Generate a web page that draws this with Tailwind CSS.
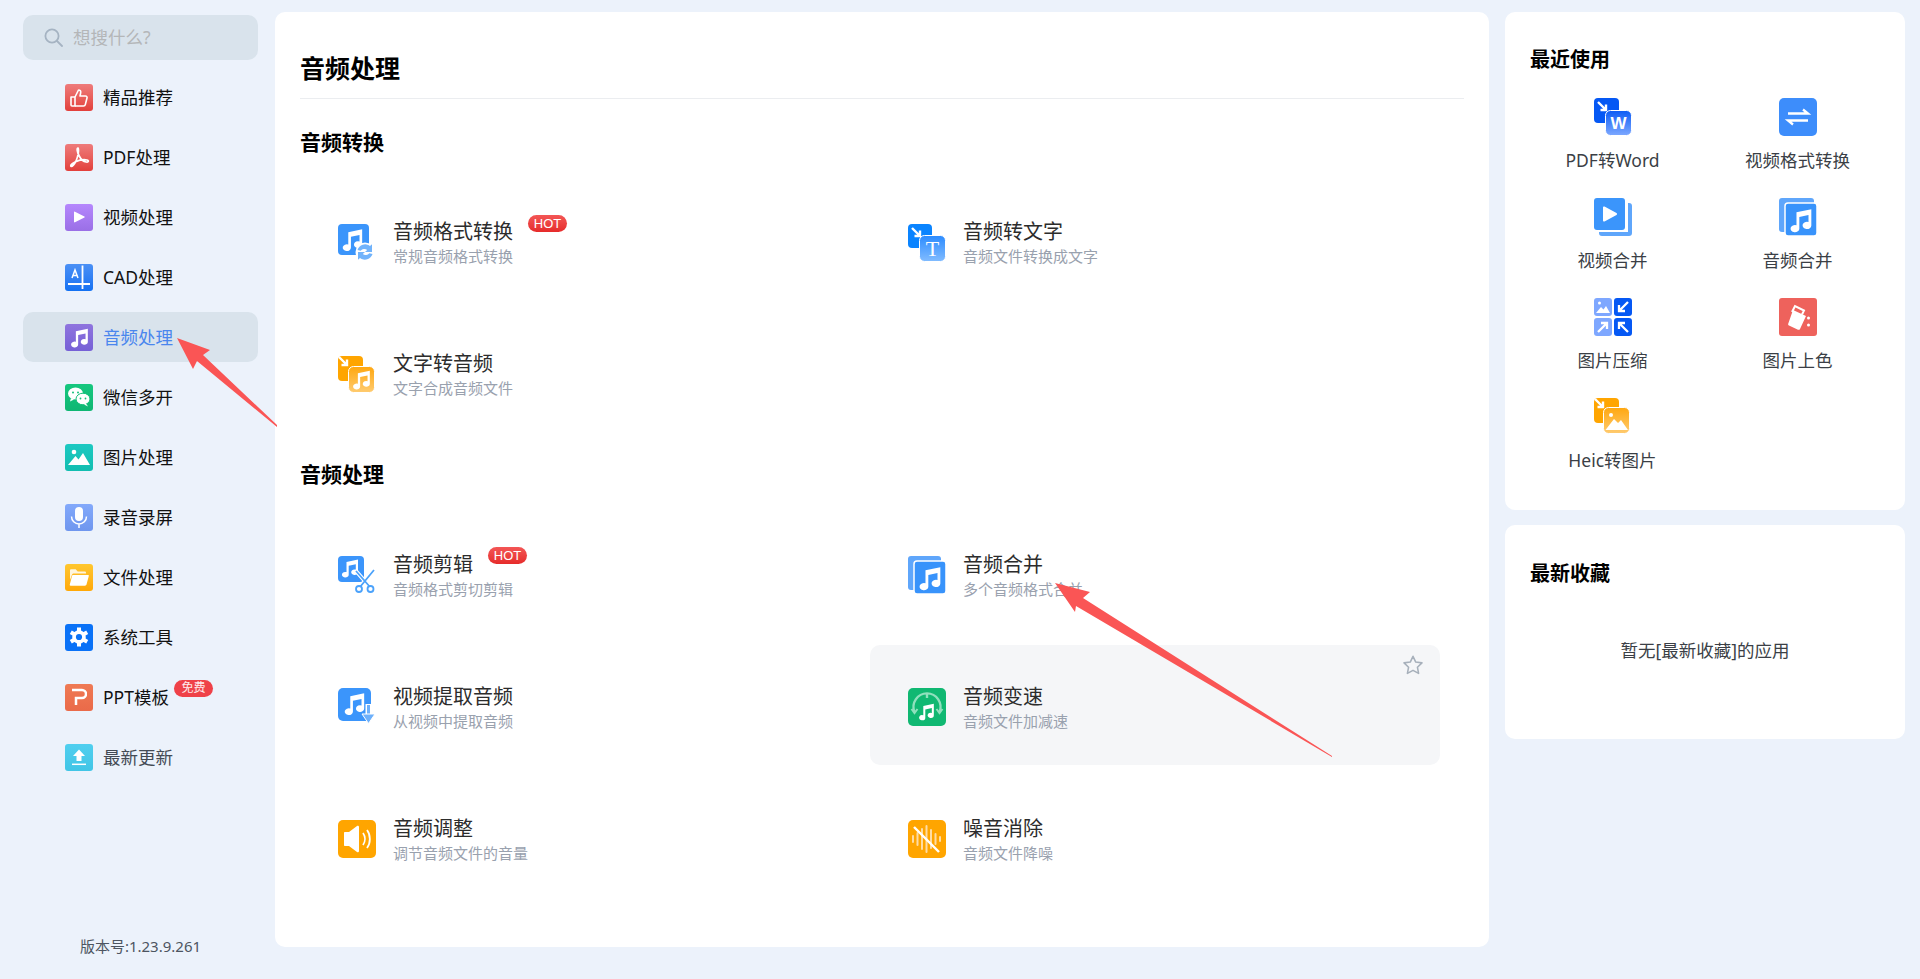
<!DOCTYPE html>
<html lang="zh-CN">
<head>
  <meta charset="UTF-8" />
  <meta name="viewport" content="width=device-width, initial-scale=1" />
  <title>音频处理</title>
  <script src="https://cdn.jsdelivr.net/npm/@tailwindcss/browser@4"></script>
</head>
<body class="relative h-[979px] overflow-hidden bg-[#ecf2fb] font-['Noto_Sans','Noto_Sans_CJK_SC',sans-serif] text-[#111]">

  <!-- shared icon parts -->
  <svg class="absolute w-0 h-0">
    <defs>
      <symbol id="note" viewBox="0 0 24 24"><path d="M8.500 6 20 3.600V16.200a3.400 2.800 0 1 1-2.200-2.600V8.200l-7.100 1.500v9a3.400 2.800 0 1 1-2.200-2.600Z" fill="#fff"/></symbol>
      <linearGradient id="gBlue" x1="0" y1="0" x2="0" y2="1"><stop offset="0" stop-color="#2b8bff"/><stop offset="1" stop-color="#82bcff"/></linearGradient>
      <linearGradient id="gOrange" x1="0" y1="0" x2="0" y2="1"><stop offset="0" stop-color="#ffa70f"/><stop offset="1" stop-color="#ffcb70"/></linearGradient>
      <linearGradient id="gWord" x1="0" y1="0" x2="0" y2="1"><stop offset="0" stop-color="#0c5cf5"/><stop offset="1" stop-color="#7da8ff"/></linearGradient>
    </defs>
  </svg>

  <div class="flex h-full">
    <!-- sidebar -->
    <aside class="flex w-[275px] h-full flex-col pl-[23px] pr-[17px] pt-[15px] pb-[23px]">
      <div class="flex h-[45px] items-center rounded-[10px] bg-[#d9e3ec] pl-[21px]">
        <svg class="w-[19px] h-[19px]" viewBox="0 0 19 19" fill="none" stroke="#a5b3c2" stroke-width="1.800"><circle cx="8" cy="8" r="6.600"/><path d="m13 13 5 5" stroke-linecap="round"/></svg>
        <span class="ml-[10px] -mt-[2px] text-[17.500px] leading-6 text-[#b4b6b8]">想搜什么?</span>
      </div>

      <nav class="mt-[13px] flex flex-col gap-[10px]">
        <a class="flex h-[49px] items-center rounded-[10px] pl-[42px] gap-[10px] text-[17.500px]">
          <span class="flex h-[27px] w-[28px] items-center justify-center rounded-[3px] bg-linear-to-b from-[#ee7b7b] to-[#e23f3b]">
            <svg class="w-[20px] h-[20px]" viewBox="0 0 20 20" fill="none" stroke="#fff" stroke-width="1.600" stroke-linejoin="round"><path d="M2 9h4v9H3a1 1 0 0 1-1-1Z"/><path d="M6 9l3.500-7c1.800 0 2.500 1.200 2.200 2.600L11 8h5.500c1.200 0 1.800 1 1.500 2l-1.700 6.600c-.2.900-.9 1.400-1.800 1.400H6" /></svg>
          </span>
          <span>精品推荐</span>
        </a>
        <a class="flex h-[50px] items-center rounded-[10px] pl-[42px] gap-[10px] text-[17.500px]">
          <span class="flex h-[27px] w-[28px] items-center justify-center rounded-[3px] bg-linear-to-b from-[#ee7b7b] to-[#e23f3b]">
            <svg class="w-[24px] h-[24px]" viewBox="0 0 24 24" fill="none" stroke="#fff" stroke-width="1.700" stroke-linecap="round"><path d="M11 3c-1.500 0-.9 4 1.200 8 1.800 3.500 4.300 5.500 7 6 2.600.4 2.800-1.500.8-2-3-.7-8 .2-12 2-3 1.400-5 3.500-4 4.300 1 .7 3.500-2 5.300-6 1.500-3.400 3-10.300 1.700-12.300Z"/></svg>
          </span>
          <span>PDF处理</span>
        </a>
        <a class="flex h-[50px] items-center rounded-[10px] pl-[42px] gap-[10px] text-[17.500px]">
          <span class="flex h-[27px] w-[28px] items-center justify-center rounded-[3px] bg-linear-to-b from-[#b587fd] to-[#9a6fe6]">
            <svg class="w-[12px] h-[12px]" viewBox="0 0 12 12"><path d="M1 1.200c0-.5.500-.8 1-.5l9.400 4.800c.5.200.5.800 0 1L2 11.300c-.5.300-1 0-1-.5Z" fill="#fff"/></svg>
          </span>
          <span>视频处理</span>
        </a>
        <a class="flex h-[50px] items-center rounded-[10px] pl-[42px] gap-[10px] text-[17.500px]">
          <span class="flex h-[27px] w-[28px] items-center justify-center rounded-[3px] bg-linear-to-b from-[#4a90f5] to-[#1271f2]">
            <svg class="w-[28px] h-[27px]" viewBox="0 0 28 27" fill="none" stroke="#fff" stroke-width="1.800"><path d="M7 14 10 6l3 8M8 11.500h4" stroke-width="1.500"/><path d="M17.500 1.500V25M3 20h22"/></svg>
          </span>
          <span>CAD处理</span>
        </a>
        <a class="flex h-[50px] items-center rounded-[10px] bg-[#d9e3ec] pl-[42px] gap-[10px] text-[17.500px] text-[#4a86ee]">
          <span class="flex h-[27px] w-[28px] items-center justify-center rounded-[3px] bg-linear-to-b from-[#8f74de] to-[#7660d6]">
            <svg class="w-[25px] h-[25px]"><use href="#note"/></svg>
          </span>
          <span>音频处理</span>
        </a>
        <a class="flex h-[50px] items-center rounded-[10px] pl-[42px] gap-[10px] text-[17.500px]">
          <span class="flex h-[27px] w-[28px] items-center justify-center rounded-[3px] bg-linear-to-b from-[#15c77f] to-[#0fb673]">
            <svg class="w-[26px] h-[24px]" viewBox="0 0 26 24"><ellipse cx="9.500" cy="8.500" rx="7.500" ry="6" fill="#fff"/><path d="m5 13-1 3.500 4-2Z" fill="#fff"/><circle cx="7" cy="7.500" r="1" fill="#15c07b"/><circle cx="12" cy="7.500" r="1" fill="#15c07b"/><ellipse cx="17" cy="14" rx="7" ry="5.800" fill="#fff" stroke="#14bf7a"/><path d="m20 18.500 2 3-4-2Z" fill="#fff"/><circle cx="14.500" cy="13.500" r=".9" fill="#15c07b"/><circle cx="19.500" cy="13.500" r=".9" fill="#15c07b"/></svg>
          </span>
          <span>微信多开</span>
        </a>
        <a class="flex h-[50px] items-center rounded-[10px] pl-[42px] gap-[10px] text-[17.500px]">
          <span class="flex h-[27px] w-[28px] items-center justify-center rounded-[3px] bg-linear-to-b from-[#1cc9c2] to-[#12bdb0]">
            <svg class="w-[24px] h-[22px]" viewBox="0 0 24 22"><circle cx="7" cy="6" r="2.300" fill="#fff"/><path d="M1 19 8.500 10l3 3.500L16 7l7 12Z" fill="#fff"/></svg>
          </span>
          <span>图片处理</span>
        </a>
        <a class="flex h-[50px] items-center rounded-[10px] pl-[42px] gap-[10px] text-[17.500px]">
          <span class="flex h-[27px] w-[28px] items-center justify-center rounded-[3px] bg-linear-to-b from-[#83a9fb] to-[#6f96ee]">
            <svg class="w-[20px] h-[23px]" viewBox="0 0 20 23" fill="none" stroke="#fff"><rect x="6" y="1" width="8" height="14" rx="4" fill="#fff" stroke="none"/><path d="M2.500 10.500a7.500 7.500 0 0 0 15 0M10 18v4" stroke-width="1.500"/></svg>
          </span>
          <span>录音录屏</span>
        </a>
        <a class="flex h-[50px] items-center rounded-[10px] pl-[42px] gap-[10px] text-[17.500px]">
          <span class="flex h-[27px] w-[28px] items-center justify-center rounded-[3px] bg-linear-to-b from-[#ffc72e] to-[#ffa805]">
            <svg class="w-[20px] h-[17px]" viewBox="0 0 20 17"><path d="M1 1.500C1 .700 1.500.300 2.200.300h4.500l2 2.200h7c.8 0 1.300.5 1.300 1.200v.800H5c-1 0-1.700.4-2 1.300L1 11Z" fill="#fff" fill-opacity=".85"/><path d="M4 6h15c.6 0 1 .5.800 1.100L17.500 15.500c-.2.700-.8 1.200-1.500 1.200H1.500c-.6 0-.9-.5-.7-1.100L3 7c.1-.6.500-1 1-1Z" fill="#fff"/></svg>
          </span>
          <span>文件处理</span>
        </a>
        <a class="flex h-[50px] items-center rounded-[10px] pl-[42px] gap-[10px] text-[17.500px]">
          <span class="flex h-[27px] w-[28px] items-center justify-center rounded-[3px] bg-[#0a72f7]">
            <svg class="w-[20px] h-[20px]" viewBox="0 0 20 20"><g stroke="#fff" stroke-width="4"><path d="M10 .5v19M1.800 5.200l16.400 9.500M1.800 14.800 18.200 5.300"/></g><circle cx="10" cy="10" r="6.800" fill="#fff"/><circle cx="10" cy="10" r="3.100" fill="#0a72f7"/></svg>
          </span>
          <span>系统工具</span>
        </a>
        <a class="flex h-[50px] items-center rounded-[10px] pl-[42px] gap-[10px] text-[17.500px]">
          <span class="flex h-[27px] w-[28px] items-center justify-center rounded-[3px] bg-linear-to-b from-[#ef7a54] to-[#ea6a49]">
            <svg class="w-[16px] h-[18px]" viewBox="0 0 16 18" fill="none" stroke="#fff" stroke-width="2.500"><path d="M1 2h10a3.500 3.500 0 0 1 0 8H5v7"/></svg>
          </span>
          <span class="relative">PPT模板
            <span class="absolute left-[71px] -top-[4px] flex h-[17px] w-[39px] items-center justify-center rounded-full bg-[#ef4148] text-[12px] leading-none text-white/90">免费</span>
          </span>
        </a>
        <a class="flex h-[50px] items-center rounded-[10px] pl-[42px] gap-[10px] text-[17.500px] text-[#444b55]">
          <span class="flex h-[27px] w-[28px] items-center justify-center rounded-[3px] bg-linear-to-b from-[#50cfef] to-[#41c5e6]">
            <svg class="w-[18px] h-[18px]" viewBox="0 0 18 18"><path d="M9 1.500 15 8h-3.500v5h-5V8H3Z" fill="#fff"/><path d="M2 16.300h14" stroke="#fff" stroke-width="1.500"/></svg>
          </span>
          <span>最新更新</span>
        </a>
      </nav>

      <p class="mt-auto text-center text-[15px] leading-5 text-[#4d5561]">版本号:1.23.9.261</p>
    </aside>

    <!-- main panel -->
    <main class="mt-3 h-[935px] w-[1214px] rounded-[10px] bg-white px-[25px] pt-[39px]">
      <h1 class="border-b border-[#ebedf0] pb-[13px] text-[25px] leading-[34px] font-bold text-black">音频处理</h1>

      <h2 class="mt-[28px] mb-[24px] text-[21px] leading-[30px] font-bold text-black">音频转换</h2>
      <div class="grid grid-cols-[570px_570px] auto-rows-[120px] gap-y-3">
        <div class="flex items-center rounded-[10px] pl-[38px] pt-[3px]">
          <svg class="w-[38px] h-[38px] shrink-0" viewBox="0 0 38 38">
            <rect width="31" height="31" rx="4" fill="#3b95fb"/>
            <use href="#note" x="0" y="1" width="29" height="29"/>
            <circle cx="27" cy="28" r="9.500" fill="#fff"/>
            <path d="M19.500 26a8 8 0 0 1 12.500-4l2-1.800V28h-7l2.200-2a4.500 4.500 0 0 0-6.500.8ZM34.500 30a8 8 0 0 1-12.500 4l-2 1.800V28h7l-2.200 2a4.500 4.500 0 0 0 6.500-.8Z" fill="#71b3fb"/>
          </svg>
          <div class="ml-[17px] min-w-0">
            <div class="relative text-[20px] leading-[28px] text-[#2c2c2c]">音频格式转换
              <span class="absolute left-[135px] top-[-3px] flex h-[17px] w-[39px] items-center justify-center rounded-full bg-linear-to-b from-[#f35555] to-[#e62a2a] text-[13px] leading-none text-white font-['Liberation_Sans',sans-serif]">HOT</span>
            </div>
            <p class="-mt-px text-[15px] leading-[22px] text-[#99a1ae]">常规音频格式转换</p>
          </div>
        </div>
        <div class="flex items-center rounded-[10px] pl-[38px] pt-[3px]">
          <svg class="w-[38px] h-[38px] shrink-0" viewBox="0 0 38 38">
            <rect width="24" height="24" rx="4" fill="#0a84ff"/>
            <path d="m4 4 8 8M12 6.500V12H6.500" stroke="#fff" stroke-width="2.400" fill="none"/>
            <rect x="11.500" y="11.500" width="26" height="26" rx="5" fill="url(#gBlue)" stroke="#fff"/>
            <text x="24.500" y="32" text-anchor="middle" font-family="Liberation Serif, serif" font-size="22" fill="#fff">T</text>
          </svg>
          <div class="ml-[17px] min-w-0">
            <div class="text-[20px] leading-[28px] text-[#2c2c2c]">音频转文字</div>
            <p class="-mt-px text-[15px] leading-[22px] text-[#99a1ae]">音频文件转换成文字</p>
          </div>
        </div>
        <div class="flex items-center rounded-[10px] pl-[38px] pt-[3px]">
          <svg class="w-[38px] h-[38px] shrink-0" viewBox="0 0 38 38">
            <rect width="25" height="25" rx="4" fill="#ffa500"/>
            <path d="m1 1 8 8M9 3.500V9H3.500" stroke="#fff" stroke-width="2.400" fill="none"/>
            <rect x="10.500" y="10.500" width="26" height="26" rx="5" fill="url(#gOrange)" stroke="#fff"/>
            <use href="#note" x="11" y="11" width="25" height="25"/>
          </svg>
          <div class="ml-[17px] min-w-0">
            <div class="text-[20px] leading-[28px] text-[#2c2c2c]">文字转音频</div>
            <p class="-mt-px text-[15px] leading-[22px] text-[#99a1ae]">文字合成音频文件</p>
          </div>
        </div>
      </div>

      <h2 class="mt-[26px] mb-[24px] text-[21px] leading-[30px] font-bold text-black">音频处理</h2>
      <div class="grid grid-cols-[570px_570px] auto-rows-[120px] gap-y-3">
        <div class="flex items-center rounded-[10px] pl-[38px] pt-[4px]">
          <svg class="w-[38px] h-[38px] shrink-0" viewBox="0 0 38 38">
            <rect width="26" height="26" rx="4" fill="#3b95fb"/>
            <use href="#note" x="0" y="0" width="24" height="24"/>
            <path d="M18 15 32 31M36 14 22 31" stroke="#fff" stroke-width="4"/>
            <path d="M18 15 32 31M36 14 22 31" stroke="#4ba2fb" stroke-width="1.800"/>
            <circle cx="21" cy="33" r="3" fill="#fff" stroke="#4ba2fb" stroke-width="1.800"/>
            <circle cx="32.500" cy="33" r="3" fill="#fff" stroke="#4ba2fb" stroke-width="1.800"/>
          </svg>
          <div class="ml-[17px] min-w-0">
            <div class="relative pt-px text-[20px] leading-[28px] text-[#2c2c2c]">音频剪辑
              <span class="absolute left-[95px] top-[-3px] flex h-[17px] w-[39px] items-center justify-center rounded-full bg-linear-to-b from-[#f35555] to-[#e62a2a] text-[13px] leading-none text-white font-['Liberation_Sans',sans-serif]">HOT</span>
            </div>
            <p class="-mt-px text-[15px] leading-[22px] text-[#99a1ae]">音频格式剪切剪辑</p>
          </div>
        </div>
        <div class="flex items-center rounded-[10px] pl-[38px] pt-[4px]">
          <svg class="w-[38px] h-[38px] shrink-0" viewBox="0 0 38 38">
            <rect width="33" height="34" rx="3" fill="#5fa6fb"/>
            <rect x="6" y="5" width="32" height="33" rx="3" fill="#3893fb" stroke="#fff" stroke-width="1.500"/>
            <use href="#note" x="6.500" y="6.500" width="31" height="31"/>
          </svg>
          <div class="ml-[17px] min-w-0">
            <div class="pt-px text-[20px] leading-[28px] text-[#2c2c2c]">音频合并</div>
            <p class="-mt-px text-[15px] leading-[22px] text-[#99a1ae]">多个音频格式合并</p>
          </div>
        </div>
        <div class="flex items-center rounded-[10px] pl-[38px] pt-[4px]">
          <svg class="w-[38px] h-[38px] shrink-0" viewBox="0 0 38 38">
            <rect width="33" height="33" rx="5" fill="#3b95fb"/>
            <use href="#note" x="2" y="1" width="29" height="29"/>
            <path d="M30.500 16v13.500" stroke="#fff" stroke-width="6"/>
            <path d="M30.500 17v10" stroke="#6db0fb" stroke-width="3"/>
            <path d="m24 26 6.500 9.500L37 26Z" fill="#6db0fb" stroke="#fff"/>
          </svg>
          <div class="ml-[17px] min-w-0">
            <div class="pt-px text-[20px] leading-[28px] text-[#2c2c2c]">视频提取音频</div>
            <p class="-mt-px text-[15px] leading-[22px] text-[#99a1ae]">从视频中提取音频</p>
          </div>
        </div>
        <div class="relative flex items-center rounded-[10px] bg-[#f5f6f8] pl-[38px] pt-[4px]">
          <svg class="w-[38px] h-[38px] shrink-0" viewBox="0 0 38 38">
            <rect width="38" height="38" rx="5" fill="#10b872"/>
            <path d="M6.500 24a13.500 13.500 0 1 1 25 0" fill="none" stroke="#8fe0bd" stroke-width="2.400"/>
            <path d="M19 5v5" stroke="#8fe0bd" stroke-width="2.400"/>
            <path d="m3.500 21 3 4 3-4M28.500 21l3 4 3-4" fill="none" stroke="#8fe0bd" stroke-width="2"/>
            <use href="#note" x="7.500" y="12.500" width="22" height="22"/>
          </svg>
          <div class="ml-[17px] min-w-0">
            <div class="pt-px text-[20px] leading-[28px] text-[#2c2c2c]">音频变速</div>
            <p class="-mt-px text-[15px] leading-[22px] text-[#99a1ae]">音频文件加减速</p>
          </div>
          <svg class="absolute right-[16px] top-[9px] w-[22px] h-[22px]" viewBox="0 0 24 24" fill="none" stroke="#a7b0bb" stroke-width="1.700" stroke-linejoin="round"><path d="m12 2.500 3 6.300 6.800.9-5 4.700 1.300 6.800-6.100-3.300-6.100 3.300 1.300-6.800-5-4.700 6.800-.9Z"/></svg>
        </div>
        <div class="flex items-center rounded-[10px] pl-[38px] pt-[4px]">
          <svg class="w-[38px] h-[38px] shrink-0" viewBox="0 0 38 38">
            <rect width="38" height="38" rx="5" fill="#ffa500"/>
            <path d="M6 13c0-.6.400-1 1-1h4l8-6c.7-.5 2-.2 2 1v24c0 1.200-1.300 1.500-2 1l-8-6H7c-.6 0-1-.4-1-1Z" fill="#fff"/>
            <path d="M25 13c2.500 3.500 2.500 8.500 0 12M29 10c3.800 5 3.800 13 0 18" fill="none" stroke="#fff" stroke-width="1.800"/>
          </svg>
          <div class="ml-[17px] min-w-0">
            <div class="pt-px text-[20px] leading-[28px] text-[#2c2c2c]">音频调整</div>
            <p class="-mt-px text-[15px] leading-[22px] text-[#99a1ae]">调节音频文件的音量</p>
          </div>
        </div>
        <div class="flex items-center rounded-[10px] pl-[38px] pt-[4px]">
          <svg class="w-[38px] h-[38px] shrink-0" viewBox="0 0 38 38">
            <rect width="38" height="38" rx="5" fill="#ffa500"/>
            <path d="M5 16v6M9.500 13v12M14 9v20M18.500 6v26M23 10v18M27.500 14v10M32 17v4" stroke="#ffdca3" stroke-width="2" stroke-linecap="round"/>
            <path d="m6 7 25 25" stroke="#fff" stroke-width="2.400"/>
          </svg>
          <div class="ml-[17px] min-w-0">
            <div class="pt-px text-[20px] leading-[28px] text-[#2c2c2c]">噪音消除</div>
            <p class="-mt-px text-[15px] leading-[22px] text-[#99a1ae]">音频文件降噪</p>
          </div>
        </div>
      </div>
    </main>

    <!-- right column -->
    <div class="ml-4 mt-3 flex w-[400px] flex-col gap-[15px]">
      <section class="h-[498px] rounded-[10px] bg-white pt-[33px]">
        <h3 class="pl-[25px] text-[20px] leading-[30px] font-bold text-black">最近使用</h3>
        <div class="mt-[23px] ml-[15px] grid grid-cols-[185px_185px] auto-rows-[100px] text-center text-[17.500px] leading-6 text-[#3b3f46]">
          <div class="flex flex-col items-center">
            <svg class="w-[38px] h-[38px]" viewBox="0 0 38 38">
              <rect width="25" height="25" rx="4" fill="#0558f4"/>
              <path d="m4 4 8 8M12 6.500V12H6.500" stroke="#fff" stroke-width="2.400" fill="none"/>
              <rect x="11.500" y="12.500" width="26" height="25" rx="5" fill="url(#gWord)" stroke="#fff"/>
              <text x="24.500" y="31" text-anchor="middle" font-family="Liberation Sans, sans-serif" font-weight="700" font-size="17" fill="#fff">W</text>
            </svg>
            <span class="mt-3">PDF转Word</span>
          </div>
          <div class="flex flex-col items-center">
            <svg class="w-[38px] h-[38px]" viewBox="0 0 38 38">
              <rect width="38" height="38" rx="5" fill="#3d8dfb"/>
              <path d="M9 15.500h20l-5-4M29 22.500H9l5 4" fill="none" stroke="#fff" stroke-width="2.300"/>
            </svg>
            <span class="mt-3">视频格式转换</span>
          </div>
          <div class="flex flex-col items-center">
            <svg class="w-[38px] h-[38px]" viewBox="0 0 38 38">
              <path d="M34 5h1a3 3 0 0 1 3 3v27a3 3 0 0 1-3 3H8a3 3 0 0 1-3-3v-1h29Z" fill="#5fa6fb"/>
              <rect width="31" height="32" rx="3" fill="#3b95fb"/>
              <path d="M9 9.500c0-.8.800-1.300 1.500-.9l12 6.500c.7.400.7 1.400 0 1.800l-12 6.500c-.7.400-1.500-.1-1.500-.9Z" fill="#fff"/>
            </svg>
            <span class="mt-3">视频合并</span>
          </div>
          <div class="flex flex-col items-center">
            <svg class="w-[38px] h-[38px]" viewBox="0 0 38 38">
              <rect width="35" height="34" rx="3" fill="#5fa6fb"/>
              <rect x="6" y="5" width="32" height="33" rx="3" fill="#3893fb" stroke="#fff" stroke-width="1.500"/>
              <use href="#note" x="6.500" y="6.500" width="31" height="31"/>
            </svg>
            <span class="mt-3">音频合并</span>
          </div>
          <div class="flex flex-col items-center">
            <svg class="w-[38px] h-[38px]" viewBox="0 0 38 38">
              <rect width="18" height="18" rx="3" fill="#7ea7ff"/>
              <circle cx="5.500" cy="5" r="1.500" fill="#fff"/><path d="m2 15 5-6 2.500 2.500L12 8l4 7Z" fill="#fff"/>
              <rect x="20" width="18" height="18" rx="3" fill="#0558f4"/>
              <path d="M34 4 25 13M25 7v6h6" fill="none" stroke="#fff" stroke-width="2.300"/>
              <rect y="20" width="18" height="18" rx="3" fill="#7ea7ff"/>
              <path d="M4 34l9-9M7 25h6v6" fill="none" stroke="#fff" stroke-width="2.300"/>
              <rect x="20" y="20" width="18" height="18" rx="3" fill="#0558f4"/>
              <path d="M34 34l-9-9M25 31v-6h6" fill="none" stroke="#fff" stroke-width="2.300"/>
            </svg>
            <span class="mt-3">图片压缩</span>
          </div>
          <div class="flex flex-col items-center">
            <svg class="w-[38px] h-[38px]" viewBox="0 0 38 38">
              <rect width="38" height="38" rx="3" fill="#ee625c"/>
              <path d="M14 12 27 18 21 31c-.4.800-1.200 1-2 .7l-9-4.300c-.8-.4-1.100-1.200-.7-2Z" fill="#fff"/>
              <path d="M13 14l3-6 9 4.500-2 4" fill="none" stroke="#fff" stroke-width="2"/>
              <circle cx="29.500" cy="20" r="1.500" fill="#fff"/><circle cx="29.500" cy="27" r="1.500" fill="#fff"/>
            </svg>
            <span class="mt-3">图片上色</span>
          </div>
          <div class="flex flex-col items-center">
            <svg class="w-[38px] h-[38px]" viewBox="0 0 38 38">
              <rect width="25" height="25" rx="4" fill="#ffa500"/>
              <path d="m1 1 8 8M9 3.500V9H3.500" stroke="#fff" stroke-width="2.400" fill="none"/>
              <rect x="9.500" y="9.500" width="26" height="26" rx="5" fill="url(#gOrange)" stroke="#fff"/>
              <circle cx="17" cy="17" r="2" fill="#fff"/>
              <path d="M11.500 32 20 21l4 4 3-3 7 10Z" fill="#fff"/>
            </svg>
            <span class="mt-3">Heic转图片</span>
          </div>
        </div>
      </section>
      <section class="h-[214px] rounded-[10px] bg-white pt-[34px]">
        <h3 class="pl-[25px] text-[20px] leading-[30px] font-bold text-black">最新收藏</h3>
        <p class="mt-[49px] text-center text-[17.500px] leading-6 text-[#3b3f46]">暂无[最新收藏]的应用</p>
      </section>
    </div>
  </div>

  <!-- annotation arrows drawn over the page -->
  <svg class="absolute left-0 top-0 w-[1920px] h-[979px] pointer-events-none" viewBox="0 0 1920 979">
    <polygon points="177,338 210,350 203,355 277,425 277,427 197,361 193,369" fill="#fa5555"/>
    <polygon points="1055,583 1090,592 1083,598 1332,756 1332,757 1076,606 1075,612" fill="#fa5555"/>
  </svg>
</body>
</html>
